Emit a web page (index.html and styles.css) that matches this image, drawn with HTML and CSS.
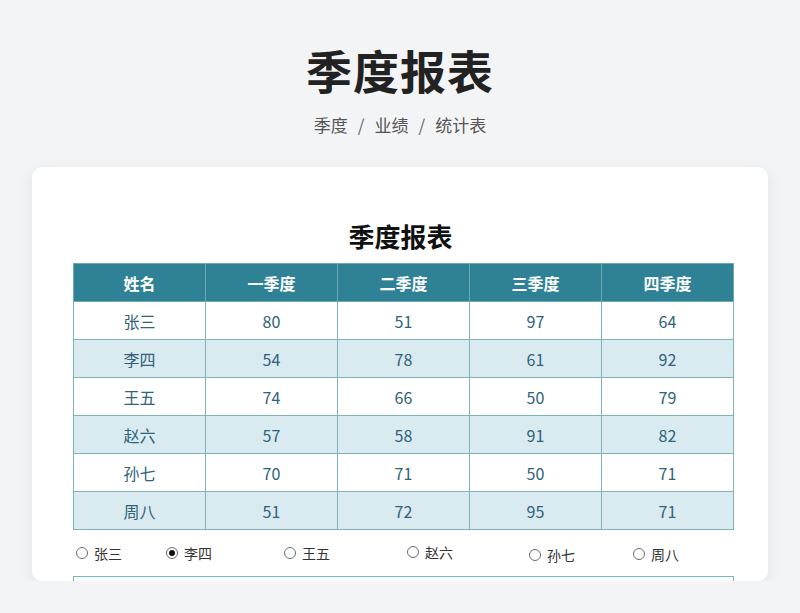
FILE: index.html
```html
<!DOCTYPE html>
<html lang="zh">
<head>
<meta charset="utf-8">
<link rel="stylesheet" href="styles.css">
</head>
<body>
<header class="page-head">
  <h1 class="page-title">季度报表</h1>
  <div class="crumbs"><span>季度</span><span class="sep">/</span><span>业绩</span><span class="sep">/</span><span>统计表</span></div>
</header>
<main class="card">
  <h2 class="card-title">季度报表</h2>
  <table class="report">
    <thead>
      <tr><th>姓名</th><th>一季度</th><th>二季度</th><th>三季度</th><th>四季度</th></tr>
    </thead>
    <tbody>
      <tr><td>张三</td><td>80</td><td>51</td><td>97</td><td>64</td></tr>
      <tr><td>李四</td><td>54</td><td>78</td><td>61</td><td>92</td></tr>
      <tr><td>王五</td><td>74</td><td>66</td><td>50</td><td>79</td></tr>
      <tr><td>赵六</td><td>57</td><td>58</td><td>91</td><td>82</td></tr>
      <tr><td>孙七</td><td>70</td><td>71</td><td>50</td><td>71</td></tr>
      <tr><td>周八</td><td>51</td><td>72</td><td>95</td><td>71</td></tr>
    </tbody>
  </table>
  <div class="choices">
    <label class="choice c1"><span class="dot"></span>张三</label>
    <label class="choice c2"><span class="dot on"></span>李四</label>
    <label class="choice c3"><span class="dot"></span>王五</label>
    <label class="choice c4"><span class="dot"></span>赵六</label>
    <label class="choice c5"><span class="dot"></span>孙七</label>
    <label class="choice c6"><span class="dot"></span>周八</label>
  </div>
  <div class="detail"></div>
</main>
</body>
</html>
```
FILE: styles.css
```css
html, body {
  margin: 0;
  padding: 0;
  background: #f3f4f6;
  font-family: "Noto Sans CJK SC", "Noto Sans", sans-serif;
}
.page-head {
  text-align: center;
  padding-top: 36px;
}
.page-title {
  margin: 0;
  font-size: 46px;
  line-height: 66px;
  font-weight: 700;
  color: #222;
  letter-spacing: 1px;
}
.crumbs {
  margin-top: 11px;
  font-size: 17px;
  line-height: 24px;
  color: #555;
  display: flex;
  justify-content: center;
  gap: 10px;
}
.sep { color: #666; }
.card {
  margin: 30px 32px 0;
  height: 414px;
  box-sizing: border-box;
  background: #fff;
  border-radius: 10px;
  box-shadow: 0 4px 16px rgba(0,0,0,0.07);
  padding: 50px 34px 0 41px;
  overflow: hidden;
}
.card-title {
  margin: 0 0 8px;
  text-align: center;
  font-size: 26px;
  line-height: 38px;
  font-weight: 700;
  color: #111;
  padding-right: 6px;
}
.report {
  width: 661px;
  border-collapse: collapse;
  table-layout: fixed;
}
.report th, .report td {
  border: 1px solid #7db3b9;
  text-align: center;
  height: 37px;
  padding: 0;
  font-size: 16px;
}
.report th {
  background: #2f8196;
  color: #fff;
  font-weight: 700;
  border-color: #6fa8b1;
}
.report td {
  color: #30627a;
}
.report tbody tr:nth-child(even) td {
  background: #d9ebf1;
}
.report tbody tr:nth-child(odd) td {
  background: #fff;
}
.choices {
  display: flex;
  height: 46px;
  align-items: center;
  font-size: 14px;
  color: #333;
}
.choice {
  display: flex;
  align-items: center;
  gap: 6px;
}
.dot {
  width: 10px;
  height: 10px;
  border: 1.5px solid #6b6b6b;
  border-radius: 50%;
  box-sizing: content-box;
  display: inline-block;
  position: relative;
}
.dot.on::after {
  content: "";
  position: absolute;
  left: 2px;
  top: 2px;
  width: 6px;
  height: 6px;
  border-radius: 50%;
  background: #111;
}
.c1 { margin-left: 3px; width: 90px; }
.c2 { width: 118px; }
.c3 { width: 123px; }
.c4 { width: 122px; margin-top: -3px; }
.c5 { width: 104px; margin-top: 3px; }
.c6 { margin-top: 2px; }
.detail {
  height: 40px;
  border: 1px solid #7db3b9;
  background: #f8fbfc;
  width: 659px;
}
```
